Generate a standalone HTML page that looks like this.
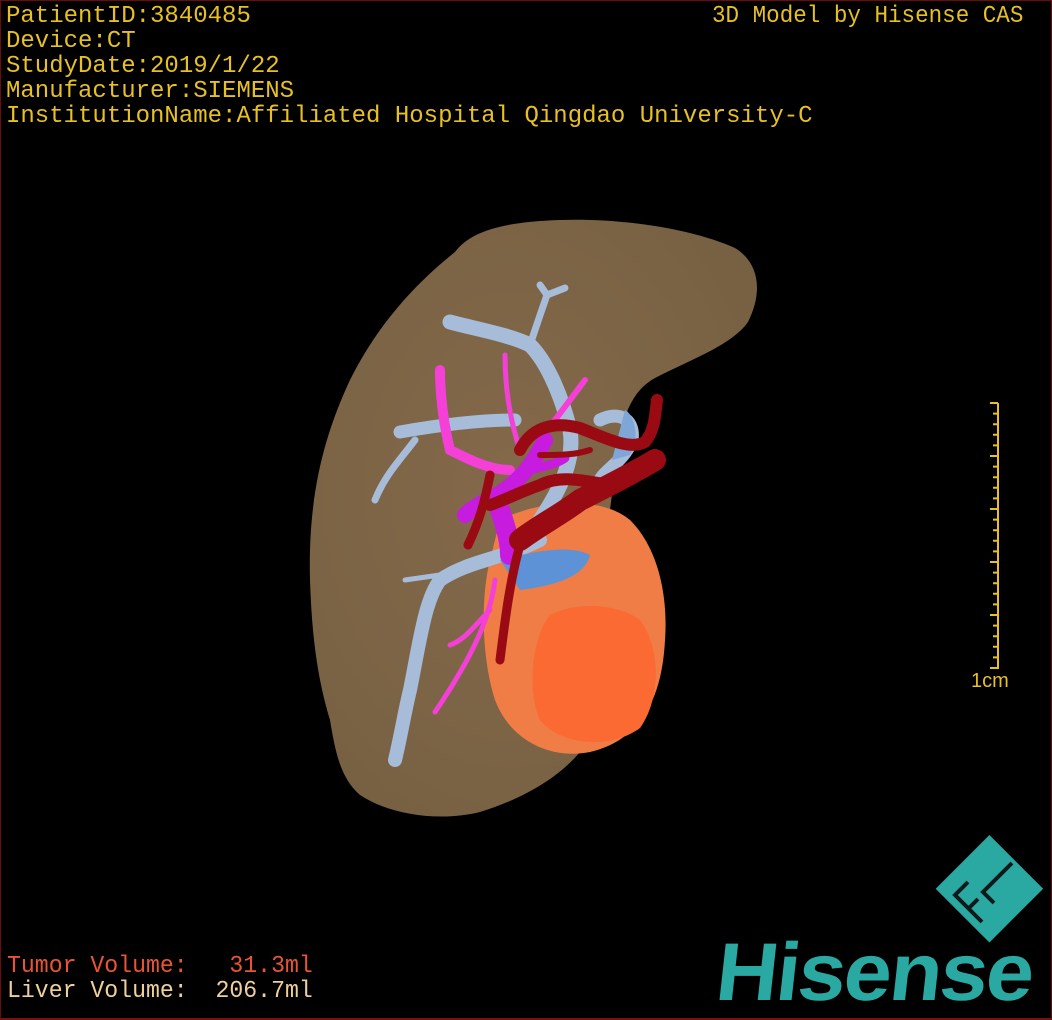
<!DOCTYPE html>
<html><head><meta charset="utf-8"><style>
html,body{margin:0;padding:0;background:#000;}
#c{position:relative;width:1052px;height:1020px;background:#000;overflow:hidden;}
.b{position:absolute;inset:0;border:1px solid #6a0c0c;border-bottom:2px solid #7a1010;box-sizing:border-box;pointer-events:none;}
.t{position:absolute;font-family:"Liberation Mono",monospace;font-size:24px;line-height:25px;white-space:pre;color:#e6c024;transform-origin:0 0;}
</style></head><body><div id="c">
<svg width="1052" height="1020" style="position:absolute;left:0;top:0">
<defs>
<radialGradient id="lg" cx="0.45" cy="0.45" r="0.6"><stop offset="0" stop-color="#84694a"/><stop offset="1" stop-color="#786143"/></radialGradient>
</defs>
<path d="M455,252 C470,232 500,222 560,220 C620,218 690,228 735,248 C758,262 764,290 748,322 C732,345 690,360 655,378 C630,392 620,420 615,470 L610,510 C640,520 665,580 665,630 C662,700 640,740 580,752 C565,770 535,795 480,812 C440,822 390,815 360,795 C340,778 335,750 330,720 C318,680 312,640 310,580 C308,500 322,440 350,380 C380,320 420,280 455,252 Z" fill="url(#lg)"/>
<!-- tumor -->
<path d="M500,520 C540,500 600,495 630,520 C660,550 668,600 665,640 C662,700 640,740 590,752 C550,760 510,740 495,700 C482,660 480,600 490,560 Z" fill="#f07c46"/>
<path d="M550,615 C580,600 620,605 640,620 C662,650 660,700 640,728 C610,750 560,745 540,720 C528,695 530,640 550,615 Z" fill="#fa6a32"/>
<!-- light blue vessels -->
<g stroke="#a6bcd9" fill="none" stroke-linecap="round">
<path d="M450,322 C480,330 510,335 530,345 C545,360 560,390 570,430 C575,460 560,490 540,520" stroke-width="15"/>
<path d="M530,345 C535,330 540,315 547,295 M547,295 L540,285 M547,295 L565,288" stroke-width="7"/>
<path d="M400,432 C440,425 480,420 515,420" stroke-width="13"/>
<path d="M415,440 C400,460 385,475 375,500" stroke-width="7"/>
<path d="M540,540 C500,560 470,560 440,580 C425,600 420,640 410,690 C405,710 400,740 395,760" stroke-width="14"/>
<path d="M440,575 L405,580" stroke-width="5"/>
<path d="M600,420 C620,410 635,420 632,440 C625,460 605,470 600,480" stroke-width="13"/>
</g>
<path d="M625,410 C635,415 640,440 630,455 L612,460 Z" fill="#7ea6d6"/>
<path d="M500,560 C540,550 570,545 590,555 C585,575 560,585 520,590 Z" fill="#5d93d6"/>
<!-- pink -->
<g stroke="#f540d8" fill="none" stroke-linecap="round">
<path d="M440,370 C440,400 445,430 450,450 C470,460 490,470 510,470" stroke-width="10"/>
<path d="M505,355 C505,390 510,420 520,450" stroke-width="5"/>
<path d="M585,380 C570,400 555,420 540,440" stroke-width="6"/>
<path d="M495,580 C490,620 470,660 435,712" stroke-width="5"/>
<path d="M490,610 C475,625 465,640 450,645" stroke-width="5"/>
</g>
<!-- purple -->
<g stroke="#c81be0" fill="none" stroke-linecap="round">
<path d="M545,440 C535,460 525,475 505,490 C490,500 475,505 465,515" stroke-width="16"/>
<path d="M500,510 C505,525 510,540 510,555" stroke-width="20"/>
<path d="M530,470 C550,465 560,462 565,458" stroke-width="9"/>
</g>
<!-- red -->
<g stroke="#9a0a12" fill="none" stroke-linecap="round">
<path d="M520,450 C530,430 550,420 580,428 C610,440 630,450 645,442 C655,430 655,415 657,400" stroke-width="12"/>
<path d="M655,460 C630,475 600,490 580,500 C560,515 540,525 520,540" stroke-width="22"/>
<path d="M610,485 C580,480 560,475 540,485 C520,492 505,500 490,505" stroke-width="12"/>
<path d="M540,455 C560,455 575,455 590,450" stroke-width="6"/>
<path d="M520,545 C510,580 505,620 500,660" stroke-width="9"/>
<path d="M490,475 C485,500 480,520 468,545" stroke-width="9"/>
</g>
</svg>

<div class="t" style="left:6px;top:4px">PatientID:3840485
Device:CT
StudyDate:2019/1/22
Manufacturer:SIEMENS
InstitutionName:Affiliated Hospital Qingdao University-C</div>
<div class="t" style="left:712px;top:4px;transform:scaleX(0.94)">3D Model by Hisense CAS</div>
<div class="t" style="left:7px;top:954px;color:#e85434;transform:scaleX(0.965)">Tumor Volume:   31.3ml</div>
<div class="t" style="left:7px;top:979px;color:#efcf9a;transform:scaleX(0.965)">Liver Volume:  206.7ml</div>

<svg width="40" height="275" style="position:absolute;left:975px;top:400px">
<g stroke="#e6c024" stroke-width="2">
<line x1="23" y1="3" x2="23" y2="269"/>
<path d="M15,3H23 M18,13.6H23 M18,24.2H23 M18,34.8H23 M18,45.4H23 M15,56H23 M18,66.6H23 M18,77.2H23 M18,87.8H23 M18,98.4H23 M15,109H23 M18,119.6H23 M18,130.2H23 M18,140.8H23 M18,151.4H23 M15,162H23 M18,172.6H23 M18,183.2H23 M18,193.8H23 M18,204.4H23 M15,215H23 M18,225.6H23 M18,236.2H23 M18,246.8H23 M18,257.4H23 M15,268H23"/>
</g></svg>
<div style="position:absolute;left:971px;top:670px;font-family:'Liberation Sans',sans-serif;font-size:20px;color:#e6c024">1cm</div>

<svg width="120" height="120" style="position:absolute;left:930px;top:835px">
<rect x="20" y="20" width="76" height="76" fill="#2aa8a2" transform="rotate(-45 58 58) translate(4 -2)"/>
<g stroke="#0a1a1a" stroke-width="4" fill="none">
<path d="M52,87 L25,60 L38,47 M38,74 L48,64"/>
<path d="M64,68 L53,57 L82,28"/>
</g></svg>
<div style="position:absolute;left:722px;top:925px;font-family:'Liberation Sans',sans-serif;font-weight:bold;font-size:82px;letter-spacing:-2px;color:#2aa8a2;transform:scaleX(1.05) skewX(-6deg);transform-origin:0 0;line-height:96px">Hisense</div>
<div class="b"></div>
</div></body></html>
